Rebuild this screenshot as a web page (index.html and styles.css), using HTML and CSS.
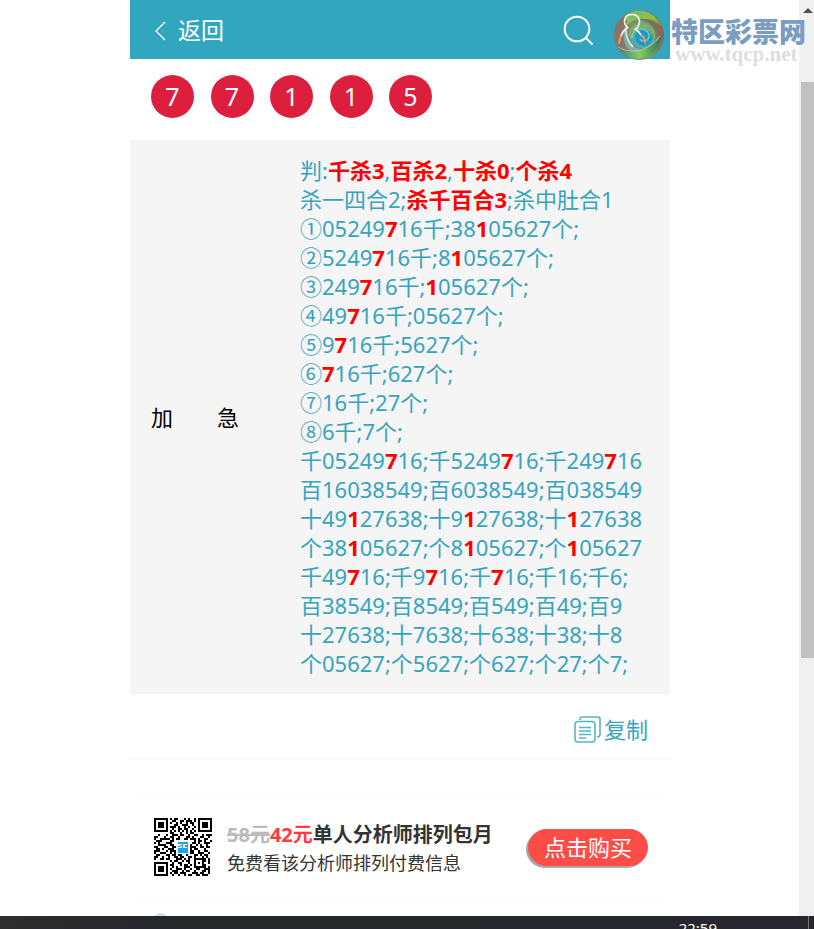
FILE: index.html
```html
<!DOCTYPE html>
<html lang="zh-CN">
<head>
<meta charset="utf-8">
<meta name="viewport" content="width=device-width, initial-scale=1">
<title>特区彩票网</title>
<link rel="stylesheet" href="styles.css">
</head>
<body>
<div class="browser">
  <div class="viewport">
    <main class="page">
      <header class="topbar">
        <a class="back" href="#">
          <svg width="12" height="20" viewBox="0 0 12 20" aria-hidden="true"><path d="M11 1 2 10l9 9" fill="none" stroke="#fff" stroke-width="1.3"/></svg>
          <span>返回</span>
        </a>
        <button class="search" type="button" aria-label="搜索">
          <svg width="32" height="32" viewBox="0 0 32 32" aria-hidden="true"><circle cx="14" cy="14" r="12.3"/><path d="m22.5 22.5 7 7"/></svg>
        </button>
        <div class="brand">
          <svg class="brand-logo" width="52" height="52" viewBox="0 0 52 52" aria-hidden="true">
            <defs>
              <linearGradient id="rim" x1="0" y1="0.6" x2="1" y2="0.4">
                <stop offset="0" stop-color="#8a675e"/><stop offset=".3" stop-color="#7f8070"/><stop offset=".6" stop-color="#7aa060"/><stop offset="1" stop-color="#7d5f58"/>
              </linearGradient>
              <linearGradient id="lime" x1="0" y1="0" x2="1" y2="1">
                <stop offset="0" stop-color="#6fae9a"/><stop offset=".5" stop-color="#8fc63c"/><stop offset="1" stop-color="#7a7a52"/>
              </linearGradient>
              <linearGradient id="green" x1="0" y1="0" x2="1" y2="0">
                <stop offset="0" stop-color="#2c8f7c"/><stop offset=".5" stop-color="#86cc60"/><stop offset="1" stop-color="#1c7a55"/>
              </linearGradient>
              <linearGradient id="brown" x1="0" y1="0" x2="1" y2="1">
                <stop offset="0" stop-color="#8a7268"/><stop offset="1" stop-color="#8a7a68"/>
              </linearGradient>
              <radialGradient id="eye"><stop offset="0" stop-color="#16a0dc"/><stop offset=".7" stop-color="#1b98c4"/><stop offset="1" stop-color="#4fb7c4"/></radialGradient>
            </defs>
            <circle cx="26" cy="26" r="25" fill="url(#rim)"/>
            <path d="M14 5C26-2 44 3 50 19 42 11 30 8 22 11 17 13 14 16 12 20 9 16 9 9 14 5Z" fill="url(#lime)"/>
            <path d="M10 9C3 15 0 25 2 33c4 8 12 12 20 12C12 39 9 24 14 12Z" fill="url(#brown)"/>
            <path d="M20 13c10-5 22 0 24 11 1 8-3 14-9 17 11-1 16-11 15-20C45 12 32 6 20 13Z" fill="#84695c"/>
            <path d="M14 12c-5 11 0 23 9 27 9 4 20-1 22-12 2 10-6 18-16 19C15 46 5 32 14 12Z" fill="#79bdb8" opacity=".8"/>
            <circle cx="29" cy="26" r="13" fill="#5aa8a0"/>
            <circle cx="31" cy="28" r="10.500" fill="url(#eye)"/>
            <path d="M15 25c2-8 9-12 17-10 9 2 13 10 9 18-1-8-5-13-12-14-6-1-11 3-10 10-3-1-4-2-4-4Z" fill="#7fae6c"/>
            <path d="M19 29c0-7 5-10 10-9 6 1 9 6 6 10-2 3-7 3-8 0" fill="none" stroke="#9ad0a0" stroke-width="1.500" opacity=".8"/>
            <path d="M6 40c10 6 29 5 42-13-1 12-11 22-23 23-8 0-15-4-19-10Z" fill="url(#green)"/>
            <path d="M5 38c12 7 29 6 42-11" fill="none" stroke="#c9cfa4" stroke-width="1" opacity=".8"/>
            <path d="M13 21c0 6 2 12 7 17" fill="none" stroke="#d9ebe6" stroke-width="1.800"/>
            <path d="M15 19c-4-3-4-7-3-9 2-6 12-6 14 0 1 3 0 7-3 10m-9-1c-3 2-5 5-6 8m14-7c2 1 4 3 6 6" fill="none" stroke="#fff1e6" stroke-width="1.600" stroke-linecap="round"/>
            <path d="M8 27c-1 2-1 4-2 7m22-8c3 2 4 5 4 8" fill="none" stroke="#ff9c66" stroke-width="1.600" stroke-linecap="round"/>
          </svg>
          <div class="brand-text">
            <strong>特区彩票网</strong>
            <span>www.tqcp.net</span>
          </div>
        </div>
      </header>

      <ol class="balls">
        <li>7</li><li>7</li><li>1</li><li>1</li><li>5</li>
      </ol>

      <section class="forecast">
        <h2><span>加</span><span>急</span></h2>
        <p>判:<b>千杀3</b>,<b>百杀2</b>,<b>十杀0</b>;<b>个杀4</b><br>
杀一四合2;<b>杀千百合3</b>;杀中肚合1<br>
①05249<b>7</b>16千;38<b>1</b>05627个;<br>
②5249<b>7</b>16千;8<b>1</b>05627个;<br>
③249<b>7</b>16千;<b>1</b>05627个;<br>
④49<b>7</b>16千;05627个;<br>
⑤9<b>7</b>16千;5627个;<br>
⑥<b>7</b>16千;627个;<br>
⑦16千;27个;<br>
⑧6千;7个;<br>
千05249<b>7</b>16;千5249<b>7</b>16;千249<b>7</b>16<br>
百16038549;百6038549;百038549<br>
十49<b>1</b>27638;十9<b>1</b>27638;十<b>1</b>27638<br>
个38<b>1</b>05627;个8<b>1</b>05627;个<b>1</b>05627<br>
千49<b>7</b>16;千9<b>7</b>16;千<b>7</b>16;千16;千6;<br>
百38549;百8549;百549;百49;百9<br>
十27638;十7638;十638;十38;十8<br>
个05627;个5627;个627;个27;个7;</p>
      </section>

      <div class="copy-row">
        <button class="copy" type="button">
          <svg width="27" height="27" viewBox="0 0 27 27" aria-hidden="true"><path d="M6 4V3q0-2 2-2h16q2 0 2 2v15q0 3-3 3"/><rect x="1" y="5.500" width="20" height="20.500" rx="3"/><path d="M5 11.500h12M5 15h12M5 18.500h12M5 22h7"/></svg>
          <span>复制</span>
        </button>
      </div>

      <section class="promo">
        <svg class="qr" width="58" height="58" viewBox="0 0 29 29" shape-rendering="crispEdges" role="img" aria-label="二维码">
          <path fill="none" stroke="#000" d="M.5.5h6v6h-6zM22.500.5h6v6h-6zM.5 22.500h6v6h-6z"/>
          <path d="M2 2h3v3H2zM24 2h3v3h-3zM2 24h3v3H2z"/>
          <path fill="none" stroke="#000" d="M8 .5h1m1 0h2m3 0h1m1 0h1m2 0h1M9 1.500h2m2 0h2m1 0h3m1 0h1M8 2.500h1m2 0h1m1 0h1m2 0h1m1 0h2M10 3.500h2m2 0h3m2 0h1M8 4.500h3m1 0h1m2 0h1m1 0h1m2 0h1M9 5.500h1m2 0h2m1 0h2m2 0h1M8 6.500h1m1 0h1m1 0h1m1 0h1m1 0h1m1 0h1m1 0h1M8 7.500h2m3 0h1m2 0h1m1 0h2M2 8.500h1m3 0h1m2 0h3m1 0h2m2 0h1m2 0h2m2 0h1m1 0h3M0 9.500h2m3 0h1m2 0h2m2 0h1m3 0h2m1 0h1m3 0h2m2 0h1M0 10.500h1m2 0h5m1 0h1m1 0h2m2 0h2m1 0h3m1 0h1m2 0h2M1 11.500h3m4 0h2m1 0h1m5 0h1m2 0h1m1 0h2m1 0h1m2 0h1M0 12.500h1m1 0h1m3 0h3m10 0h2m1 0h1m2 0h3M2 13.500h4m2 0h2m8 0h1m2 0h1m1 0h1m2 0h1M0 14.500h2m3 0h2m2 0h2m7 0h3m2 0h2m1 0h2M1 15.500h2m1 0h1m2 0h3m8 0h1m1 0h2m3 0h1M0 16.500h3m3 0h1m1 0h3m7 0h2m2 0h1m2 0h2M0 17.500h1m2 0h3m2 0h1m1 0h2m5 0h3m2 0h3m2 0h1M1 18.500h2m3 0h2m1 0h2m1 0h2m2 0h1m3 0h2m1 0h1m1 0h2M0 19.500h2m2 0h1m2 0h1m2 0h2m1 0h2m2 0h2m1 0h1m3 0h1m1 0h1M0 20.500h1m2 0h2m1 0h2m3 0h3m1 0h1m1 0h1m2 0h6m1 0h1M8 21.500h1m1 0h2m2 0h1m1 0h2m2 0h1m3 0h2m1 0h1M9 22.500h1m2 0h2m3 0h1m2 0h1m1 0h1m1 0h1m2 0h1M8 23.500h2m3 0h1m1 0h2m1 0h1m1 0h1m3 0h2M9 24.500h1m1 0h1m3 0h3m2 0h6m1 0h1M8 25.500h1m2 0h3m1 0h1m2 0h1m2 0h2m2 0h3M9 26.500h3m2 0h1m1 0h2m2 0h1m3 0h2m1 0h1M8 27.500h1m1 0h2m1 0h3m3 0h3m1 0h2m2 0h1M9 28.500h1m2 0h1m2 0h1m1 0h2m2 0h2m1 0h3"/>
          <path fill="#fff" d="M11 11h7v7h-7z"/>
          <path fill="#1aa4ea" d="M12 12h5v5.500h-5z"/>
          <path fill="#fff" d="M12 13h2v.5h-1v.5h1v1h-2v-.5h1v-.5h-1zM14.500 13h2v.5h-1v1h1v.5h-2z"/>
        </svg>
        <div class="offer">
          <h3><del>58元</del><em>42元</em>单人分析师排列包月</h3>
          <p>免费看该分析师排列付费信息</p>
        </div>
        <button class="buy" type="button">点击购买</button>
      </section>
      <section class="next"><i></i></section>
    </main>
  </div>
  <div class="scrollbar"><i class="arrow"></i><i class="thumb"></i></div>
</div>
<footer class="taskbar"><time>22:59</time><i></i></footer>
</body>
</html>
```
FILE: styles.css
```css
* { box-sizing: border-box; }

body {
  margin: 0;
  height: 100vh;
  display: flex;
  flex-direction: column;
  overflow: hidden;
  background: #fff;
  font-family: "Noto Sans", "Noto Sans CJK SC", sans-serif;
  font-size: 22px;
  line-height: 29px;
}

h2, h3, p, ol { margin: 0; padding: 0; }
button { border: 0; padding: 0; background: none; font: inherit; color: inherit; }
svg { display: block; flex: none; }

.browser { flex: 1; min-height: 0; display: flex; }
.viewport { flex: 1; min-width: 0; overflow-x: visible; overflow-y: clip; padding-left: 1px; }
.page { max-width: 540px; margin: 0 auto; }

.topbar {
  position: relative;
  display: flex;
  align-items: center;
  justify-content: space-between;
  height: 59px;
  padding: 2px 75px 0 24px;
  background: #33a6bf;
  color: #fff;
}
.back {
  display: flex;
  align-items: center;
  gap: 12px;
  color: #fff;
  font-size: 23px;
  text-decoration: none;
}
.search svg { fill: none; stroke: #fff; stroke-width: 2; }

/* The brand mark floats over the right edge of the bar */
.brand {
  position: absolute;
  z-index: 1;
  top: 9px;
  left: 483px;
  display: flex;
  gap: 6px;
}
.brand-text { padding-top: 8px; white-space: nowrap; }
.brand-text strong {
  display: block;
  color: #7a9dc1;
  font-family: "Noto Sans CJK SC", sans-serif;
  font-size: 27px;
  font-weight: 900;
  line-height: 27px;
}
.brand-text span {
  display: block;
  padding-left: 4px;
  color: #dedede;
  font: bold 21px/21px "Liberation Serif", serif;
}

.balls {
  display: flex;
  justify-content: space-between;
  width: 302px;
  padding: 16px 0 22px 21px;
  list-style: none;
}
.balls li {
  width: 43px;
  height: 43px;
  border-radius: 50%;
  background: #dc1f3d;
  color: #fff;
  font-size: 25px;
  line-height: 43px;
  text-align: center;
}

.forecast {
  display: flex;
  align-items: center;
  padding: 16px 0 16px 21px;
  background: #f5f5f5;
}
.forecast h2 {
  display: flex;
  justify-content: space-between;
  width: 88px;
  margin-right: 61px;
  font-size: 22px;
  font-weight: 400;
  color: #000;
}
.forecast p { color: #37a4bd; white-space: nowrap; }
.forecast b { color: #f00; font-weight: 700; }

.copy-row {
  display: flex;
  justify-content: flex-end;
  height: 66px;
  padding: 5px 22px 0 0;
  border-bottom: 1px solid #f9f9f9;
}
.copy {
  display: flex;
  align-items: center;
  gap: 3px;
  color: #37a4bd;
}
.copy svg { fill: none; stroke: #55b4c9; stroke-width: 1.6; }

.promo {
  display: flex;
  align-items: center;
  height: 110px;
  margin-top: 33px;
  padding: 0 22px 2px 24px;
  border-top: 1px solid #fafafa;
  border-bottom: 1px solid #fafafa;
}
.offer { flex: 1; padding-left: 15px; padding-top: 3px; white-space: nowrap; color: #333; }
.offer h3 { font-size: 20px; }
.offer del { color: #bbb; }
.offer em { color: #ff3a40; font-style: normal; }
.offer p { font-size: 18px; }
.buy {
  width: 120px;
  height: 37px;
  border-radius: 19px;
  background: #ff4c46;
  box-shadow: -2px 2px 0 #a9a9a9;
  color: #fff;
}

.next { height: 60px; padding: 10px 22px; }
.next i { display: block; width: 18px; height: 18px; border-radius: 50%; background: #ddd; }

.scrollbar {
  display: flex;
  flex-direction: column;
  align-items: flex-end;
  width: 15px;
  padding-top: 8px;
  background: #f0f0f0;
}
.arrow {
  margin-right: 1px;
  border: 5px solid transparent;
  border-top: 0;
  border-bottom-color: #505050;
}
.thumb { width: 13px; height: calc(100% - 332px); margin-top: 69px; background: #c1c1c1; }

.taskbar {
  display: flex;
  justify-content: flex-end;
  gap: 91px;
  height: 13px;
  padding-right: 5px;
  overflow: hidden;
  background: linear-gradient(90deg, #2d2d2d, #26272d 20%, #26262e);
  color: #fff;
}
.taskbar time { padding-top: 2px; font-size: 15px; line-height: 21px; }
.taskbar i { width: 1px; background: #777; }
```
